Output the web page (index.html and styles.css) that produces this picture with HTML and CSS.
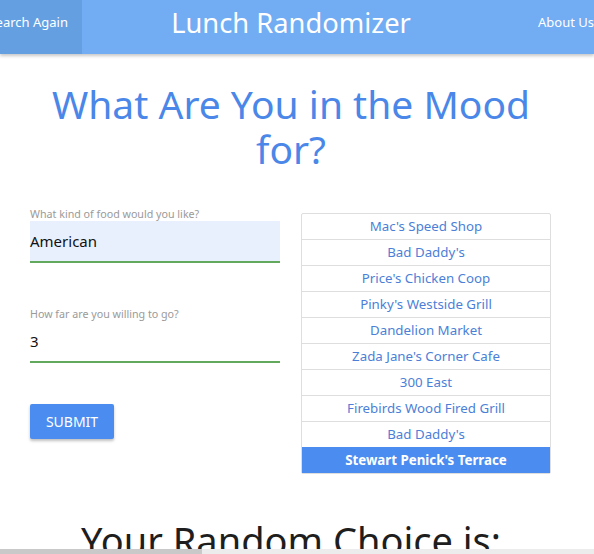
FILE: index.html
```html
<!DOCTYPE html>
<html lang="en">
<head>
<meta charset="utf-8">
<title>Lunch Randomizer</title>
<link rel="stylesheet" href="styles.css">
</head>
<body>
<header class="nav">
  <a class="nav-again" href="#">Search Again</a>
  <div class="nav-title">Lunch Randomizer</div>
  <a class="nav-about" href="#">About Us</a>
</header>
<main class="main">
  <h1 class="mood">What Are You in the Mood for?</h1>
  <section class="picker">
    <form class="form">
      <div class="field">
        <label class="field-label">What kind of food would you like?</label>
        <div class="field-input autofill">American</div>
      </div>
      <div class="field">
        <label class="field-label">How far are you willing to go?</label>
        <div class="field-input">3</div>
      </div>
      <button class="submit" type="button">SUBMIT</button>
    </form>
    <ul class="list">
      <li class="list-item">Mac's Speed Shop</li>
      <li class="list-item">Bad Daddy's</li>
      <li class="list-item">Price's Chicken Coop</li>
      <li class="list-item">Pinky's Westside Grill</li>
      <li class="list-item">Dandelion Market</li>
      <li class="list-item">Zada Jane's Corner Cafe</li>
      <li class="list-item">300 East</li>
      <li class="list-item">Firebirds Wood Fired Grill</li>
      <li class="list-item">Bad Daddy's</li>
      <li class="list-item active">Stewart Penick's Terrace</li>
    </ul>
  </section>
  <h2 class="choice">Your Random Choice is:</h2>
</main>
<div class="hscroll"><div class="hscroll-thumb"></div></div>
</body>
</html>
```
FILE: styles.css
```css
html, body {
  margin: 0;
  padding: 0;
  overflow: hidden;
  height: 554px;
  background: #fff;
}
body {
  font-family: "Noto Sans", "Open Sans", sans-serif;
  color: #222;
}
.nav {
  display: grid;
  grid-template-columns: 82px 1fr 56px;
  height: 54px;
  background: #72acf3;
  box-shadow: 0 2px 3px rgba(0,0,0,0.22);
  overflow: hidden;
  position: relative;
  z-index: 1;
}
.nav-again {
  display: flex;
  align-items: center;
  justify-content: flex-end;
  padding-right: 14px;
  background: #649fe2;
  color: #fff;
  font-size: 13px;
  text-decoration: none;
  white-space: nowrap;
  overflow: hidden;
  padding-bottom: 10px;
}
.nav-title {
  display: flex;
  align-items: center;
  justify-content: center;
  padding-right: 38px;
  color: #fff;
  font-size: 27.3px;
  padding-bottom: 10px;
}
.nav-about {
  display: flex;
  align-items: center;
  color: #fff;
  font-size: 13px;
  text-decoration: none;
  white-space: nowrap;
  padding-bottom: 10px;
}
.main {
  padding-right: 12px;
}
.mood {
  max-width: 500px;
  margin: 27px auto 0;
  text-align: center;
  font-weight: 400;
  font-size: 39px;
  line-height: 45px;
  color: #4a87e8;
}
.picker {
  display: grid;
  grid-template-columns: 250px 250px;
  column-gap: 21px;
  padding-left: 30px;
  margin-top: 37px;
  align-items: start;
}
.form {
  display: flex;
  flex-direction: column;
  align-items: flex-start;
}
.field {
  align-self: stretch;
  display: flex;
  flex-direction: column;
  margin-bottom: 45px;
}
.field + .field {
  margin-bottom: 41px;
}
.field-label {
  font-size: 10.7px;
  line-height: 12px;
  color: #9a9a9a;
}
.field-input {
  height: 40px;
  margin-top: 1px;
  display: flex;
  align-items: center;
  font-size: 15px;
  color: #111;
  border-bottom: 2px solid #62a95e;
}
.autofill {
  background: #e8f0fe;
}
.submit {
  width: 84px;
  height: 35px;
  border: 0;
  border-radius: 2px;
  background: #4a8cf0;
  color: #fff;
  font-family: inherit;
  font-size: 14px;
  box-shadow: 0 2px 3px rgba(0,0,0,0.25);
  padding: 0;
}
.list {
  list-style: none;
  margin: 5px 0 0;
  padding: 0;
  border: 1px solid #dedede;
  border-radius: 2px;
}
.list-item {
  height: 25px;
  line-height: 25px;
  text-align: center;
  font-size: 13.3px;
  color: #4b7fd8;
  border-top: 1px solid #dedede;
  white-space: nowrap;
}
.list-item:first-child {
  border-top: 0;
}
.list-item.active {
  background: #4a8cf0;
  color: #fff;
  font-weight: 700;
  border-top-color: #4a8cf0;
}
.choice {
  margin: 44px 0 0;
  text-align: center;
  font-weight: 400;
  font-size: 38px;
  line-height: 44px;
  color: #1e1e1e;
  white-space: nowrap;
}
.hscroll {
  position: fixed;
  left: 0;
  right: 0;
  bottom: 0;
  height: 5px;
  background: #ececec;
  z-index: 2;
}
.hscroll-thumb {
  width: 202px;
  height: 100%;
  background: #c9c9c9;
}
```
